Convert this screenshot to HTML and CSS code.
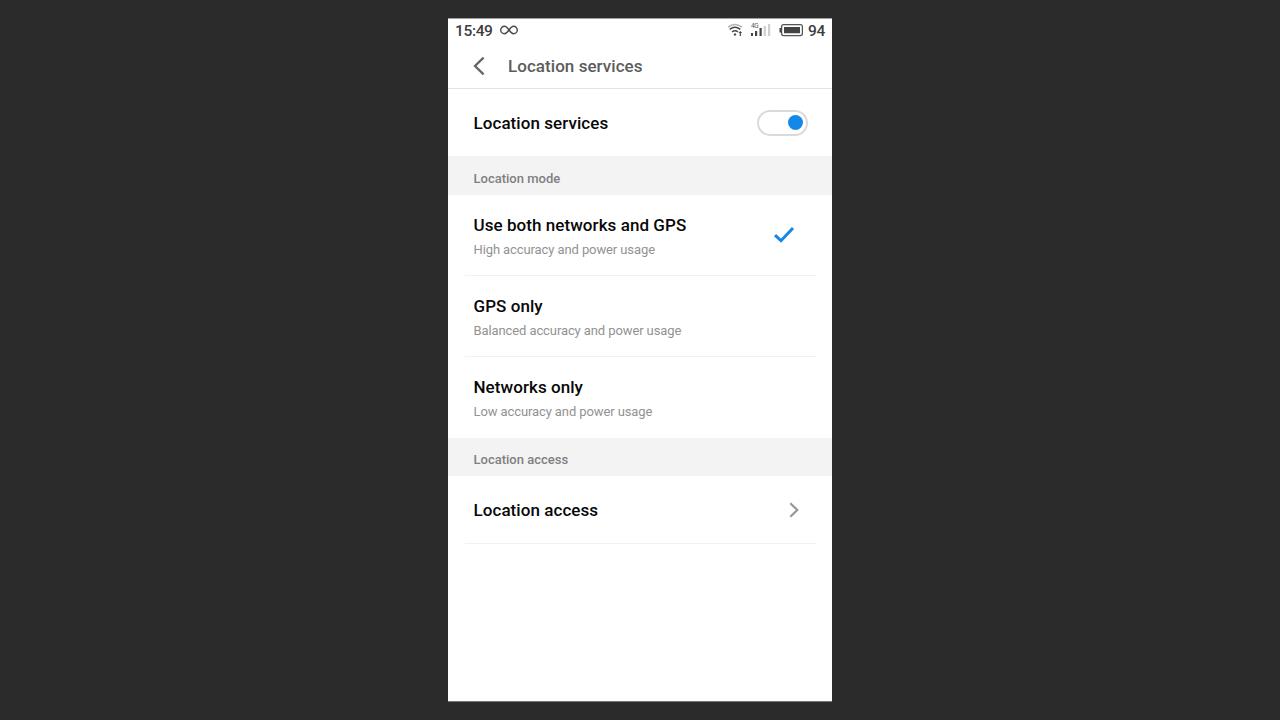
FILE: index.html
```html
<!DOCTYPE html>
<html lang="en">
<head>
<meta charset="utf-8">
<title>Location services</title>
<link rel="stylesheet" href="styles.css">
</head>
<body>
<main class="phone">
  <div class="status">
    <span class="time">15:49</span>
    <svg class="infinity" width="18" height="10" viewBox="0 0 18 10"><path d="M9 5C7.400 2.700 6.300 1.300 4.400 1.300a3.700 3.700 0 0 0 0 7.400C6.300 8.700 7.400 7.300 9 5s2.700-3.700 4.600-3.700a3.700 3.700 0 0 1 0 7.400C11.700 8.700 10.600 7.300 9 5z"/></svg>
    <svg class="indicators" width="76" height="18" viewBox="0 0 76 18">
      <g class="wifi"><path d="M1 6.200Q8 .6 15 6.200" class="faint"/><path d="M2.700 8.400Q8 4.300 13.300 8.400M5 11Q8 8.700 11 11"/><path d="M8 12l1.500 1.500L8 15l-1.500-1.500zM11.500 12l1.800-2 1.800 2h-1.200v3h-1.200v-3z" class="solid"/></g>
      <text x="24" y="6.500" class="net">4G</text>
      <path d="M24 12h2v3h-2zM28 10h2.200v5H28zM32.500 7h2.200v8h-2.200z" class="solid"/>
      <path d="M36.700 5h2.200v10h-2.200zM41 3h2.200v12H41z" class="weak"/>
      <rect x="54.600" y="3.600" width="20.800" height="11" rx="2" class="case"/>
      <path d="M57 6h16v6.300H57zM52.500 7h1.700v4.500h-1.700z" class="solid"/>
    </svg>
    <span class="level">94</span>
  </div>
  <header class="bar">
    <svg width="12" height="20" viewBox="0 0 12 20"><path d="M10.600 1.700L2 10l8.600 8.300"/></svg>
    <h1>Location services</h1>
  </header>
  <section class="row"><h2>Location services</h2><span class="switch"></span></section>
  <div class="label">Location mode</div>
  <section class="option">
    <div><h2>Use both networks and GPS</h2><p>High accuracy and power usage</p></div>
    <svg class="check" width="22" height="18" viewBox="0 0 22 18"><path d="M2 9.200l6 5.500L20 2"/></svg>
  </section>
  <section class="option"><div><h2>GPS only</h2><p>Balanced accuracy and power usage</p></div></section>
  <section class="option last"><div><h2>Networks only</h2><p>Low accuracy and power usage</p></div></section>
  <div class="label access">Location access</div>
  <section class="row link"><h2>Location access</h2>
    <svg class="chevron" width="10" height="16" viewBox="0 0 10 16"><path d="M1.300 1.300L8.300 8l-7 6.700"/></svg>
  </section>
</main>
</body>
</html>
```
FILE: styles.css
```css
* { box-sizing: border-box; }
body { margin: 0; height: 720px; padding-top: 18px; background: #2b2b2b; font-family: Roboto, sans-serif; overflow: hidden; }
h1, h2, p { margin: 0; font-weight: 500; white-space: nowrap; }
svg { display: block; fill: none; flex: none; }
.phone { width: 384px; height: 684px; margin: 0 auto; background: #fff; border-top: 1px solid #a0a0a0; border-bottom: 1px solid #777; }
.status { display: flex; align-items: center; height: 24px; padding: 0 7px; color: #3d3d3d; font-size: 15.500px; font-weight: 500; line-height: 24px; letter-spacing: -.35px; }
.infinity { margin: -2px 0 0 7.500px; stroke: #4a4a4a; stroke-width: 1.400; }
.indicators { margin: -2px 0 0 auto; }
.wifi { stroke: #484848; stroke-width: 1.500; }
.faint { stroke: #b5b5b5; }
.solid { fill: #444; stroke: none; }
.weak { fill: #cfcfcf; }
.case { stroke: #555; stroke-width: 1.300; }
.net { fill: #555; font-size: 6.500px; font-weight: 400; }
.level { margin-left: 4.500px; letter-spacing: -.3px; }
.bar { display: flex; align-items: center; height: 46px; padding: 0 25px; border-bottom: 1px solid #e3e3e3; }
.bar svg { stroke: #666; stroke-width: 2.300; }
.bar h1 { margin-left: 23px; color: #5c5c5c; font-size: 17px; line-height: 22px; letter-spacing: .05px; }
.row { display: flex; align-items: center; justify-content: space-between; height: 67px; padding: 0 24px 0 25.500px; }
h2 { color: #080808; font-size: 17px; line-height: 22px; letter-spacing: .06px; }
.switch { display: flex; align-items: center; justify-content: flex-end; width: 51px; height: 26px; padding-right: 3px; border: 2px solid #dadada; border-radius: 13px; }
.switch::after { content: ""; width: 15px; height: 15px; border-radius: 50%; background: #1488e8; }
.label { display: flex; align-items: center; height: 39px; padding: 7px 25.500px 0; background: #f3f3f3; color: #808080; font-size: 13px; font-weight: 500; line-height: 18px; }
.option { display: flex; justify-content: space-between; height: 81px; margin: 0 16px 0 17px; padding: 19px 21px 0 8.500px; border-bottom: 1px solid #f1f1f1; }
.option p { margin-top: 5px; color: #929292; font-size: 13px; font-weight: 400; line-height: 18px; letter-spacing: -.1px; }
.last { border-bottom-color: #fff; }
.check { margin-top: 12px; stroke: #1488e8; stroke-width: 3; }
.access { height: 38px; padding-top: 6px; }
.link { height: 68px; margin: 0 16px 0 17px; padding: 0 17.500px 0 8.500px; border-bottom: 1px solid #f1f1f1; }
.chevron { stroke: #979797; stroke-width: 2.200; }
```
